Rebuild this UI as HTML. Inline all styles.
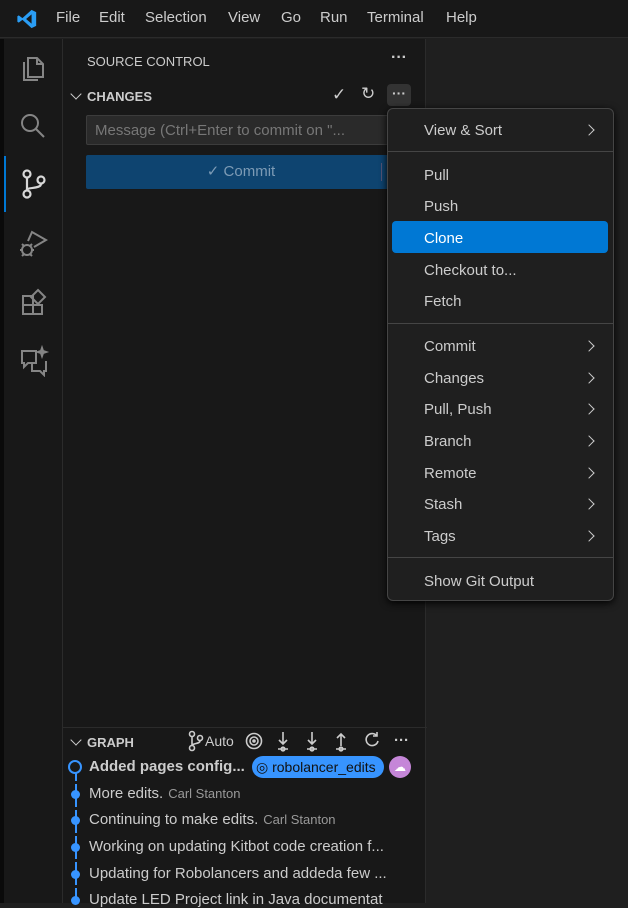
<!DOCTYPE html>
<html><head><style>
*{margin:0;padding:0;box-sizing:border-box}
body{width:628px;height:903px;background:#1f1f1f;font-family:"Liberation Sans",sans-serif;color:#ccc;position:relative;overflow:hidden;font-size:14px}
.a{position:absolute}
.title{left:0;top:0;width:628px;height:38px;background:#181818;border-bottom:1px solid #2b2b2b}
.title span{position:absolute;top:9px;font-size:15px;color:#ccc}
.act{left:0;top:39px;width:62px;height:864px;background:#181818;border-left:4px solid #0a0a0a}
.side{left:62px;top:39px;width:364px;height:864px;background:#181818;border-left:1px solid #2b2b2b;border-right:1px solid #2b2b2b}
.menu{left:387px;top:108px;width:227px;height:493px;background:#1f1f1f;border:1px solid #454545;border-radius:6px;box-shadow:0 2px 8px #000}
.mi{position:absolute;left:36px;font-size:15px;color:#ccc}
.sep{position:absolute;left:0;width:225px;height:1px;background:#454545}
.chev{position:absolute;right:20px;width:8px;height:8px;border-right:1.5px solid #ccc;border-top:1.5px solid #ccc;transform:rotate(45deg)}
.g{position:absolute;left:89px;font-size:15px;color:#ccc;white-space:nowrap}
.g small{font-size:13px;color:#999;margin-left:5px}
.dot{position:absolute;left:71px;width:9px;height:9px;border-radius:50%;background:#3794ff}
.dn{position:absolute;width:8px;height:8px;border-right:1.5px solid #ccc;border-bottom:1.5px solid #ccc;transform:rotate(45deg)}
</style></head><body>
<div class="a title">
<svg class="a" style="left:16px;top:8px" width="22" height="22" viewBox="0 0 24 24"><path d="M17 2 L22 4.5 V19.5 L17 22 L7 13 L3 16 L1.5 15 V9 L3 8 L7 11 Z M17 7 L11 12 L17 17 Z" fill="#2a9df4"/></svg>
<span style="left:56px">File</span><span style="left:99px">Edit</span><span style="left:145px">Selection</span><span style="left:228px">View</span><span style="left:281px">Go</span><span style="left:320px">Run</span><span style="left:367px">Terminal</span><span style="left:446px">Help</span>
</div>
<div class="a act">
<div class="a" style="left:0;top:117px;width:2px;height:56px;background:#0078d4"></div>
<svg class="a" style="left:14px;top:14px" width="30" height="30" viewBox="0 0 30 30" fill="none" stroke="#858585" stroke-width="2"><path d="M10 5h9l6 6v13h-15z M19 5v6h6 M6 9v18h14"/></svg>
<svg class="a" style="left:14px;top:72px" width="30" height="30" viewBox="0 0 30 30" fill="none" stroke="#858585" stroke-width="2"><circle cx="12" cy="12" r="8"/><path d="M18 18l8 8"/></svg>
<svg class="a" style="left:16px;top:129px" width="28" height="32" viewBox="0 0 28 32" fill="none" stroke="#d7d7d7" stroke-width="2.2"><circle cx="7" cy="6" r="3.5"/><circle cx="7" cy="26" r="3.5"/><circle cx="21" cy="12" r="3.5"/><path d="M7 10v12 M21 16c0 5-14 3-14 6"/></svg>
<svg class="a" style="left:14px;top:190px" width="32" height="32" viewBox="0 0 32 32" fill="none" stroke="#858585" stroke-width="2"><path d="M10 12 L14 3 L28 11 L16 18"/><circle cx="9" cy="21" r="5"/><path d="M2 21h2 M14 21h2 M4 15l2 2 M4 27l2-2 M14 15l-2 2 M14 27l-2-2"/></svg>
<svg class="a" style="left:16px;top:248px" width="30" height="30" viewBox="0 0 30 30" fill="none" stroke="#858585" stroke-width="2"><path d="M3 9h10v18H3z M3 18h19v9h-9 M18 3l7 7-7 7-7-7z"/></svg>
<svg class="a" style="left:14px;top:306px" width="32" height="32" viewBox="0 0 32 32" fill="none" stroke="#858585" stroke-width="2"><path d="M4 6h14v12h-8l-4 4v-4H4z M14 18v8h8l4 4v-4h2V16"/><path d="M24 3l1 3 3 1-3 1-1 3-1-3-3-1 3-1z" fill="#858585"/></svg>
</div>
<div class="a side">
<div class="a" style="left:24px;top:15px;font-size:13px;color:#ccc">SOURCE CONTROL</div>
<div class="a" style="left:328px;top:10px;color:#ccc;font-size:16px;font-weight:bold">···</div>
<div class="dn" style="left:9px;top:51px"></div>
<div class="a" style="left:24px;top:50px;font-size:13px;font-weight:bold;color:#ccc">CHANGES</div>
<div class="a" style="left:269px;top:46px;font-size:17px;color:#ccc">✓</div>
<div class="a" style="left:298px;top:45px;font-size:17px;color:#ccc">↻</div>
<div class="a" style="left:324px;top:45px;width:24px;height:22px;background:#333;border-radius:4px;text-align:center;line-height:18px;color:#ccc;font-weight:bold">···</div>
<div class="a" style="left:23px;top:76px;width:310px;height:30px;background:#2a2a2a;border:1px solid #3c3c3c;border-radius:2px;padding:6px 8px;font-size:15px;color:#777;white-space:nowrap;overflow:hidden">Message (Ctrl+Enter to commit on "...</div>
<div class="a" style="left:23px;top:116px;width:310px;height:34px;background:#0e4470;border-radius:2px;text-align:center;line-height:34px;font-size:15px;color:#7d9bb5">✓ Commit</div>
<div class="a" style="left:318px;top:124px;width:1px;height:18px;background:#557"></div>
<div class="a" style="left:0;top:688px;width:364px;height:1px;background:#2b2b2b"></div>
<div class="dn" style="left:9px;top:697px"></div>
<div class="a" style="left:24px;top:696px;font-size:13px;font-weight:bold;color:#ccc">GRAPH</div>
<svg class="a" style="left:124px;top:691px" width="240" height="22" viewBox="0 0 240 22" fill="none" stroke="#ccc" stroke-width="1.6">
<circle cx="5" cy="4" r="2.5"/><circle cx="5" cy="18" r="2.5"/><circle cx="13" cy="8" r="2.5"/><path d="M5 7v8 M13 11c0 3-8 2-8 5"/>
<text x="18" y="16" fill="#ccc" stroke="none" font-size="14" font-family="Liberation Sans">Auto</text>
<circle cx="67" cy="11" r="7.5"/><circle cx="67" cy="11" r="4"/><circle cx="67" cy="11" r="1" fill="#ccc"/>
<path d="M96 2v12 M92 10l4 4 4-4 M91 19h10"/><circle cx="96" cy="19" r="1.8"/>
<path d="M125 2v12 M121 10l4 4 4-4 M120 19h10"/><circle cx="125" cy="19" r="1.8"/>
<path d="M154 4v12 M150 8l4-4 4 4 M149 19h10"/><circle cx="154" cy="19" r="1.8"/>
<path d="M190 6a6 6 0 1 0 1 5 M190 2v4h-4"/>
<text x="207" y="15" fill="#ccc" stroke="none" font-size="15" font-weight="bold" font-family="Liberation Sans">···</text>
</svg>
</div>
<div class="a" style="left:75px;top:771px;width:2px;height:132px;background:repeating-linear-gradient(#3794ff 0 10px,transparent 10px 13px)"></div>
<div class="a" style="left:68px;top:760px;width:14px;height:14px;border-radius:50%;border:2px solid #3794ff;background:#181818"></div>
<div class="g" style="top:758px;font-weight:bold">Added pages config...</div>
<div class="a" style="left:252px;top:756px;width:132px;height:22px;border-radius:11px;background:#3794ff;color:#111;font-size:14px;line-height:22px;padding-left:4px;white-space:nowrap">◎ robolancer_edits</div>
<div class="a" style="left:389px;top:756px;width:22px;height:22px;border-radius:50%;background:#c586d8;color:#fff;text-align:center;font-size:12px;line-height:22px">☁</div>
<div class="dot" style="top:790px"></div><div class="g" style="top:785px">More edits.<small>Carl Stanton</small></div>
<div class="dot" style="top:816px"></div><div class="g" style="top:811px">Continuing to make edits.<small>Carl Stanton</small></div>
<div class="dot" style="top:843px"></div><div class="g" style="top:838px">Working on updating Kitbot code creation f...</div>
<div class="dot" style="top:870px"></div><div class="g" style="top:865px">Updating for Robolancers and addeda few ...</div>
<div class="dot" style="top:896px"></div><div class="g" style="top:891px">Update LED Project link in Java documentat</div>
<div class="a menu">
<div class="mi" style="top:13px">View &amp; Sort</div><div class="chev" style="top:17px"></div>
<div class="sep" style="top:42px"></div>
<div class="mi" style="top:58px">Pull</div>
<div class="mi" style="top:89px">Push</div>
<div class="a" style="left:4px;top:112px;width:216px;height:32px;background:#0078d4;border-radius:4px"></div>
<div class="mi" style="top:121px;color:#fff">Clone</div>
<div class="mi" style="top:153px">Checkout to...</div>
<div class="mi" style="top:184px">Fetch</div>
<div class="sep" style="top:214px"></div>
<div class="mi" style="top:229px">Commit</div><div class="chev" style="top:233px"></div>
<div class="mi" style="top:261px">Changes</div><div class="chev" style="top:265px"></div>
<div class="mi" style="top:292px">Pull, Push</div><div class="chev" style="top:296px"></div>
<div class="mi" style="top:324px">Branch</div><div class="chev" style="top:328px"></div>
<div class="mi" style="top:356px">Remote</div><div class="chev" style="top:360px"></div>
<div class="mi" style="top:387px">Stash</div><div class="chev" style="top:391px"></div>
<div class="mi" style="top:419px">Tags</div><div class="chev" style="top:423px"></div>
<div class="sep" style="top:448px"></div>
<div class="mi" style="top:464px">Show Git Output</div>
</div>
</body></html>
